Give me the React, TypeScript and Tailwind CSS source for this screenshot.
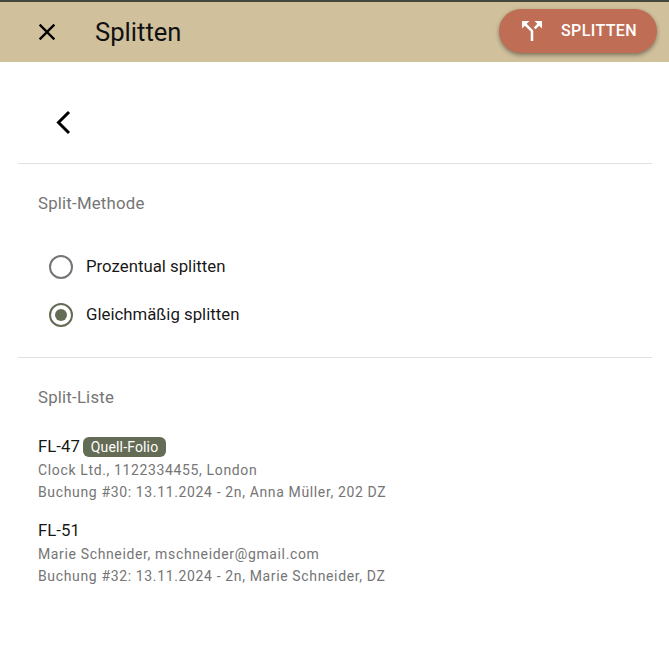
import React from "react";

function Radio({ checked, label }: { checked?: boolean; label: string }) {
  return (
    <div className="flex h-12 items-center pl-[11px]">
      <div className="flex h-6 w-6 items-center justify-center">
        <div className={`flex h-[24px] w-[24px] items-center justify-center rounded-full border-2 ${checked ? "border-[#656c55]" : "border-[#757575]"}`}>
          {checked && <div className="h-3 w-3 rounded-full bg-[#656c55]" />}
        </div>
      </div>
      <span className="ml-[13px] text-[16.8px] text-[rgba(0,0,0,0.92)]">{label}</span>
    </div>
  );
}

function Folio({ title, badge, l1, l2 }: { title: string; badge?: string; l1: string; l2: string }) {
  return (
    <div className="mb-[15px]">
      <div className="mb-[1px] flex h-6 items-center gap-[3px] text-[16.8px] leading-6 text-[rgba(0,0,0,0.92)]">
        <span>{title}</span>
        {badge && <span className="mt-[2px] flex h-5 items-center rounded-[6px] bg-[#656c55] px-[8px] text-sm leading-5 tracking-[0.15px] text-white">{badge}</span>}
      </div>
      <div className="text-sm leading-[22px] tracking-[0.64px] text-[#757575]">{l1}</div>
      <div className="text-sm leading-[22px] tracking-[0.64px] text-[#757575]">{l2}</div>
    </div>
  );
}

export default function App() {
  return (
    <div className="h-[653px] w-[669px] overflow-hidden bg-white font-['Roboto',sans-serif]">
      <div className="h-[2px] bg-[#43493a]" />
      <header className="flex h-[60px] items-center justify-between bg-[#d0c09c] pl-[33px] pr-[12px]">
        <div className="flex items-center">
          <svg width="28" height="28" viewBox="0 0 24 24" fill="#000">
            <path d="M19 6.41 17.59 5 12 10.59 6.41 5 5 6.41 10.59 12 5 17.59 6.41 19 12 13.41 17.59 19 19 17.59 13.41 12z" />
          </svg>
          <h1 className="ml-[34px] text-[25.6px] font-normal leading-8 text-[#111]">Splitten</h1>
        </div>
        <button className="-mt-[2px] flex h-11 w-[158px] items-center rounded-full bg-[#bf6e55] pl-[18px] text-base font-medium tracking-[0.4px] text-white shadow-[0_3px_5px_-1px_rgba(0,0,0,0.3),0_1px_4px_rgba(0,0,0,0.2)]">
          <svg width="30" height="30" viewBox="0 0 24 24" fill="#fff" className="-mt-[1px]">
            <path d="M14 4l2.29 2.29-2.88 2.88 1.42 1.42 2.88-2.88L20 10V4zm-4 0H4v6l2.29-2.29 4.71 4.7V20h2v-8.41l-5.29-5.3z" />
          </svg>
          <span className="ml-[14px]">SPLITTEN</span>
        </button>
      </header>

      <main className="pl-[18px] pr-[17px]">
        <div className="flex h-[102px] items-center border-b border-[#e0e0e0] pl-[23px]">
          <svg width="48" height="48" viewBox="0 0 48 48" fill="none" stroke="#000" strokeWidth="3" className="mt-[20px]">
            <path d="M28 13 L 17.5 23.5 L 28 34" />
          </svg>
        </div>

        <section className="border-b border-[#e0e0e0] pb-[18px] pl-5">
          <h2 className="pb-[28px] pt-[27px] text-[16.8px] leading-6 tracking-[0.2px] text-[#757575]">Split-Methode</h2>
          <Radio label="Prozentual splitten" />
          <Radio checked label="Gleichmäßig splitten" />
        </section>

        <section className="pl-5">
          <h2 className="pb-[25px] pt-[27px] text-[16.8px] leading-6 tracking-[0.2px] text-[#757575]">Split-Liste</h2>
          <Folio title="FL-47" badge="Quell-Folio" l1="Clock Ltd., 1122334455, London" l2="Buchung #30: 13.11.2024 - 2n, Anna Müller, 202 DZ" />
          <Folio title="FL-51" l1="Marie Schneider, mschneider@gmail.com" l2="Buchung #32: 13.11.2024 - 2n, Marie Schneider, DZ" />
        </section>
      </main>
    </div>
  );
}
